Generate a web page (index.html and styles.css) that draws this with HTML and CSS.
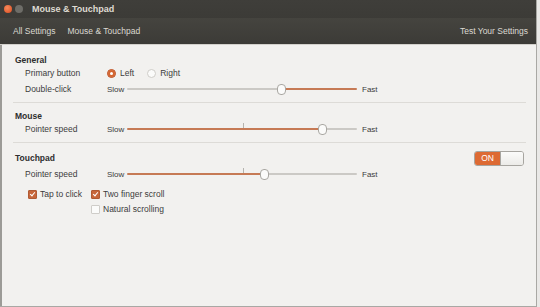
FILE: index.html
```html
<!DOCTYPE html>
<html lang="en">
<head>
    <meta charset="UTF-8">
    <title>Mouse &amp; Touchpad</title>
    <link rel="stylesheet" href="styles.css">
</head>
<body>
    <div class="window">

        <!-- title bar -->
        <div class="titlebar">
            <span class="btn close"></span>
            <span class="btn minimize"></span>
            <span class="title">Mouse &amp; Touchpad</span>
        </div>

        <!-- toolbar -->
        <div class="toolbar">
            <span class="crumb">All Settings</span>
            <span class="crumb">Mouse &amp; Touchpad</span>
            <span class="test">Test Your Settings</span>
        </div>

        <div class="content">

            <!-- General -->
            <div class="heading">General</div>
            <div class="row">
                <span class="label">Primary button</span>
                <span class="radio checked"></span><span class="opt">Left</span>
                <span class="radio"></span><span class="opt">Right</span>
            </div>
            <div class="row">
                <span class="label">Double-click</span>
                <span class="slow">Slow</span>
                <div class="slider">
                    <div class="track grey" style="width: 151px"></div>
                    <div class="knob"></div>
                    <div class="track orange fill"></div>
                </div>
                <span class="fast">Fast</span>
            </div>
            <div class="sep sep-general"></div>

            <!-- Mouse -->
            <div class="heading">Mouse</div>
            <div class="row">
                <span class="label">Pointer speed</span>
                <span class="slow">Slow</span>
                <div class="slider">
                    <div class="tick"></div>
                    <div class="track orange" style="width: 192px"></div>
                    <div class="knob"></div>
                    <div class="track grey fill"></div>
                </div>
                <span class="fast">Fast</span>
            </div>
            <div class="sep sep-mouse"></div>

            <!-- Touchpad -->
            <div class="heading heading-row">
                <span>Touchpad</span>
                <div class="toggle">
                    <span class="on">ON</span>
                    <span class="off"></span>
                </div>
            </div>
            <div class="row row-touch">
                <span class="label">Pointer speed</span>
                <span class="slow">Slow</span>
                <div class="slider">
                    <div class="tick"></div>
                    <div class="track orange" style="width: 134px"></div>
                    <div class="knob"></div>
                    <div class="track grey fill"></div>
                </div>
                <span class="fast">Fast</span>
            </div>

            <div class="checks">
                <div class="check-row">
                    <span class="check checked"></span><span class="check-label tap">Tap to click</span>
                    <span class="check checked"></span><span class="check-label">Two finger scroll</span>
                </div>
                <div class="check-row second">
                    <span class="check"></span><span class="check-label">Natural scrolling</span>
                </div>
            </div>
        </div>
    </div>
</body>
</html>
```

FILE: styles.css
```css
body {
    margin: 0;
    font-family: "Liberation Sans", Arial, sans-serif;
    font-size: 8.5px;
    background-color: #e9e8e6;
}

.window {
    width: 536px;
    height: 306px;
    border-right: 1px solid #a9a8a4;
    border-bottom: 1px solid #a9a8a4;
    background-color: #f2f1ef;
    display: flex;
    flex-direction: column;
}

.titlebar {
    height: 18px;
    background: linear-gradient(#3f3e3a, #3c3b37);
    display: flex;
    align-items: center;
    padding-left: 4px;
}

.btn {
    width: 8px;
    height: 8px;
    border-radius: 50%;
    margin-right: 3px;
}

.close {
    background: radial-gradient(circle at 40% 35%, #f58a5c, #de4b1e);
}

.minimize {
    background: #6e6d68;
}

.title {
    margin-left: 6px;
    color: #dfdbd2;
    font-weight: bold;
    font-size: 9px;
}

.toolbar {
    height: 26px;
    background: linear-gradient(#45443f, #3c3b37);
    border-bottom: 1px solid #d3d1cc;
    display: flex;
    align-items: center;
    padding: 0 8px 0 13px;
    color: #dcd9d2;
}

.crumb {
    margin-right: 12px;
}

.test {
    margin-left: auto;
}

.content {
    flex: 1;
    border-left: 2px solid #9c9b97;
    padding: 10px 10px 0 11px;
    color: #3c3c3c;
}

.heading {
    height: 10px;
    line-height: 10px;
    padding-left: 2px;
    font-weight: bold;
    color: #2e2e2e;
}

.heading-row {
    display: flex;
    align-items: center;
    justify-content: space-between;
    margin-top: 10px;
}

.row {
    height: 16px;
    display: flex;
    align-items: center;
    padding-left: 12px;
}

.row-touch {
    margin-top: 3px;
}

.label {
    width: 82px;
}

.radio {
    width: 7px;
    height: 7px;
    border-radius: 50%;
    border: 1px solid #cfcdc9;
    background: #fbfbfa;
    margin-right: 4px;
}

.radio.checked {
    background: #d5652f;
    border-color: #c0562a;
    box-shadow: inset 0 0 0 2px #d5652f, inset 0 0 0 4px #fff;
}

.opt {
    margin-right: 13px;
}

.slow {
    width: 20px;
    font-size: 8px;
}

.fast {
    margin-left: 5px;
    font-size: 8px;
}

.slider {
    position: relative;
    width: 230px;
    height: 12px;
    display: flex;
    align-items: center;
}

.track {
    height: 2px;
    border-radius: 1px;
}

.fill {
    flex: 1;
}

.grey {
    background-color: #cbc9c5;
}

.orange {
    background-color: #c67a55;
}

.knob {
    width: 7px;
    height: 9px;
    border-radius: 4px;
    border: 1px solid #a9a7a2;
    background: #fbfbfa;
    margin: 0 -1px;
    z-index: 1;
}

.tick {
    position: absolute;
    left: 116px;
    top: 0;
    width: 1px;
    height: 5px;
    background-color: #b5b3ae;
}

.sep {
    height: 1px;
    background-color: #dddbd7;
    margin-top: 5px;
}

.sep-general {
    margin-bottom: 8px;
}

.sep-mouse {
    margin-bottom: 0;
}

.toggle {
    width: 48px;
    height: 13px;
    display: flex;
    border: 1px solid #a7a5a0;
    border-radius: 3px;
    overflow: hidden;
    margin-right: 2px;
}

.on {
    width: 25px;
    background-color: #dd6a33;
    color: #fff;
    font-weight: normal;
    font-size: 8.5px;
    text-align: center;
    line-height: 13px;
}

.off {
    flex: 1;
    background: linear-gradient(#fbfbfa, #ecebe8);
    border-left: 1px solid #a7a5a0;
}

.checks {
    margin-top: 4px;
    padding-left: 15px;
}

.check-row {
    height: 16px;
    display: flex;
    align-items: center;
}

.check-row.second {
    height: 14px;
    padding-left: 63px;
}

.check {
    width: 7px;
    height: 7px;
    border: 1px solid #cfcdc9;
    border-radius: 1px;
    background: #fbfbfa;
    margin-right: 3px;
    position: relative;
}

.check.checked {
    background-color: #c7663a;
    border-color: #b05a33;
}

.check.checked::after {
    content: "";
    position: absolute;
    left: 2px;
    top: 0;
    width: 2px;
    height: 4px;
    border: solid #fff;
    border-width: 0 1.5px 1.5px 0;
    transform: rotate(40deg);
}

.check-label.tap {
    width: 51px;
}
```
